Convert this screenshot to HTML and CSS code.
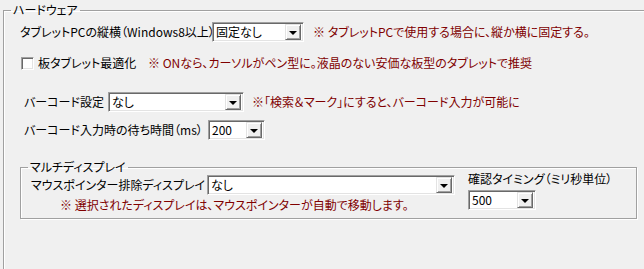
FILE: index.html
```html
<!DOCTYPE html>
<html lang="ja">
<head>
    <meta charset="UTF-8">
    <title>ハードウェア設定</title>
    <link rel="stylesheet" href="styles.css">
</head>
<body>
    <fieldset class="group outer">
        <legend>ハードウェア</legend>

        <div class="row row-tablet">
            <span class="label label-tablet">タブレットPCの縦横（Windows8以上）</span>
            <div class="combo combo-tablet"><span class="value">固定なし</span><span class="drop"></span></div>
            <span class="note note-tablet">※ タブレットPCで使用する場合に、縦か横に固定する。</span>
        </div>

        <div class="row row-check">
            <span class="checkbox"></span>
            <span class="label label-check">板タブレット最適化</span>
            <span class="note">※ ONなら、カーソルがペン型に。液晶のない安価な板型のタブレットで推奨</span>
        </div>

        <div class="row row-barcode">
            <span class="label label-barcode">バーコード設定</span>
            <div class="combo combo-barcode"><span class="value">なし</span><span class="drop"></span></div>
            <span class="note note-barcode">※「検索＆マーク」にすると、バーコード入力が可能に</span>
        </div>

        <div class="row row-wait">
            <span class="label label-wait">バーコード入力時の待ち時間（ms）</span>
            <div class="combo combo-wait"><span class="value">200</span><span class="drop"></span></div>
        </div>

        <fieldset class="group inner">
            <legend>マルチディスプレイ</legend>
            <div class="multi">
                <div class="multi-main">
                    <div class="row">
                        <span class="label label-pointer">マウスポインター排除ディスプレイ</span>
                        <div class="combo combo-display"><span class="value">なし</span><span class="drop"></span></div>
                    </div>
                    <span class="note note-multi">※ 選択されたディスプレイは、マウスポインターが自動で移動します。</span>
                </div>
                <div class="multi-side">
                    <span class="label">確認タイミング（ミリ秒単位）</span>
                    <div class="combo combo-timing"><span class="value">500</span><span class="drop"></span></div>
                </div>
            </div>
        </fieldset>
    </fieldset>
</body>
</html>
```

FILE: styles.css
```css
* {
    margin: 0;
    padding: 0;
    box-sizing: border-box;
}

body {
    font-family: "Noto Sans CJK JP", "Noto Sans", sans-serif;
    font-size: 12px;
    line-height: 14px;
    font-feature-settings: "palt";
    color: #000;
    background: #f0f0f0;
    width: 644px;
    height: 269px;
    overflow: hidden;
}

/* group boxes */
.group {
    border: 1px solid #a0a0a0;
    box-shadow: 1px 1px 0 #fff, inset 1px 1px 0 #fff;
    min-inline-size: 0;
}

.group legend {
    margin-left: 7px;
    padding: 0 2px;
    line-height: 14px;
}

.outer {
    margin: 3px 0 0 3px;
    width: 641px;
    height: 266px;
    border-right: none;
    border-bottom: none;
    box-shadow: inset 1px 1px 0 #fff;
}

.inner {
    margin: 20px 0 0 16px;
    width: 617px;
    height: 59px;
}

/* rows */
.row {
    display: flex;
    align-items: center;
    height: 20px;
}

.row-tablet {
    margin: 5px 0 0 16px;
}

.row-check {
    margin: 11px 0 0 17px;
}

.row-barcode {
    margin: 19px 0 0 20px;
}

.row-wait {
    margin: 8px 0 0 20px;
}

.label {
    white-space: nowrap;
}

.label-tablet {
    width: 192px;
}

.label-check {
    width: 110px;
    margin-left: 4px;
}

.label-barcode {
    width: 84px;
}

.label-wait {
    width: 184px;
}

.label-pointer {
    width: 176px;
}

.note {
    color: #800000;
    white-space: nowrap;
}

.note-tablet {
    margin-left: 9px;
}

.note-barcode {
    margin-left: 8px;
}

/* classic combo box */
.combo {
    display: flex;
    align-items: center;
    height: 20px;
    background: #fff;
    border-top: 1px solid #a0a0a0;
    border-left: 1px solid #a0a0a0;
    border-bottom: 1px solid #fff;
    border-right: 1px solid #fff;
    box-shadow: inset 1px 1px 0 #696969, inset -1px -1px 0 #e3e3e3;
    padding: 2px 2px 2px 3px;
    flex-shrink: 0;
}

.combo .value {
    flex: 1;
    line-height: 14px;
}

.drop {
    width: 16px;
    height: 16px;
    background: #f0f0f0;
    border-top: 1px solid #e3e3e3;
    border-left: 1px solid #e3e3e3;
    border-bottom: 1px solid #696969;
    border-right: 1px solid #696969;
    box-shadow: inset 1px 1px 0 #fff, inset -1px -1px 0 #a0a0a0;
    display: flex;
    align-items: center;
    justify-content: center;
}

.drop::after {
    content: "";
    border-left: 4px solid transparent;
    border-right: 4px solid transparent;
    border-top: 4px solid #000;
    margin-top: 1px;
}

.combo-tablet {
    width: 92px;
}

.combo-barcode {
    width: 136px;
}

.combo-wait {
    width: 57px;
}

.combo-display {
    width: 248px;
}

.combo-timing {
    width: 68px;
    margin-top: 4px;
}

/* checkbox */
.checkbox {
    width: 13px;
    height: 13px;
    background: #fff;
    border-top: 1px solid #a0a0a0;
    border-left: 1px solid #a0a0a0;
    border-bottom: 1px solid #fff;
    border-right: 1px solid #fff;
    box-shadow: inset 1px 1px 0 #696969, inset -1px -1px 0 #e3e3e3;
}

/* multi display block */
.multi {
    display: flex;
    margin-top: 1px;
}

.multi-main {
    margin-left: 10px;
    width: 437px;
}

.note-multi {
    display: block;
    margin: 3px 0 0 29px;
}

.multi-side {
    display: flex;
    flex-direction: column;
    margin-top: -3px;
}
```
